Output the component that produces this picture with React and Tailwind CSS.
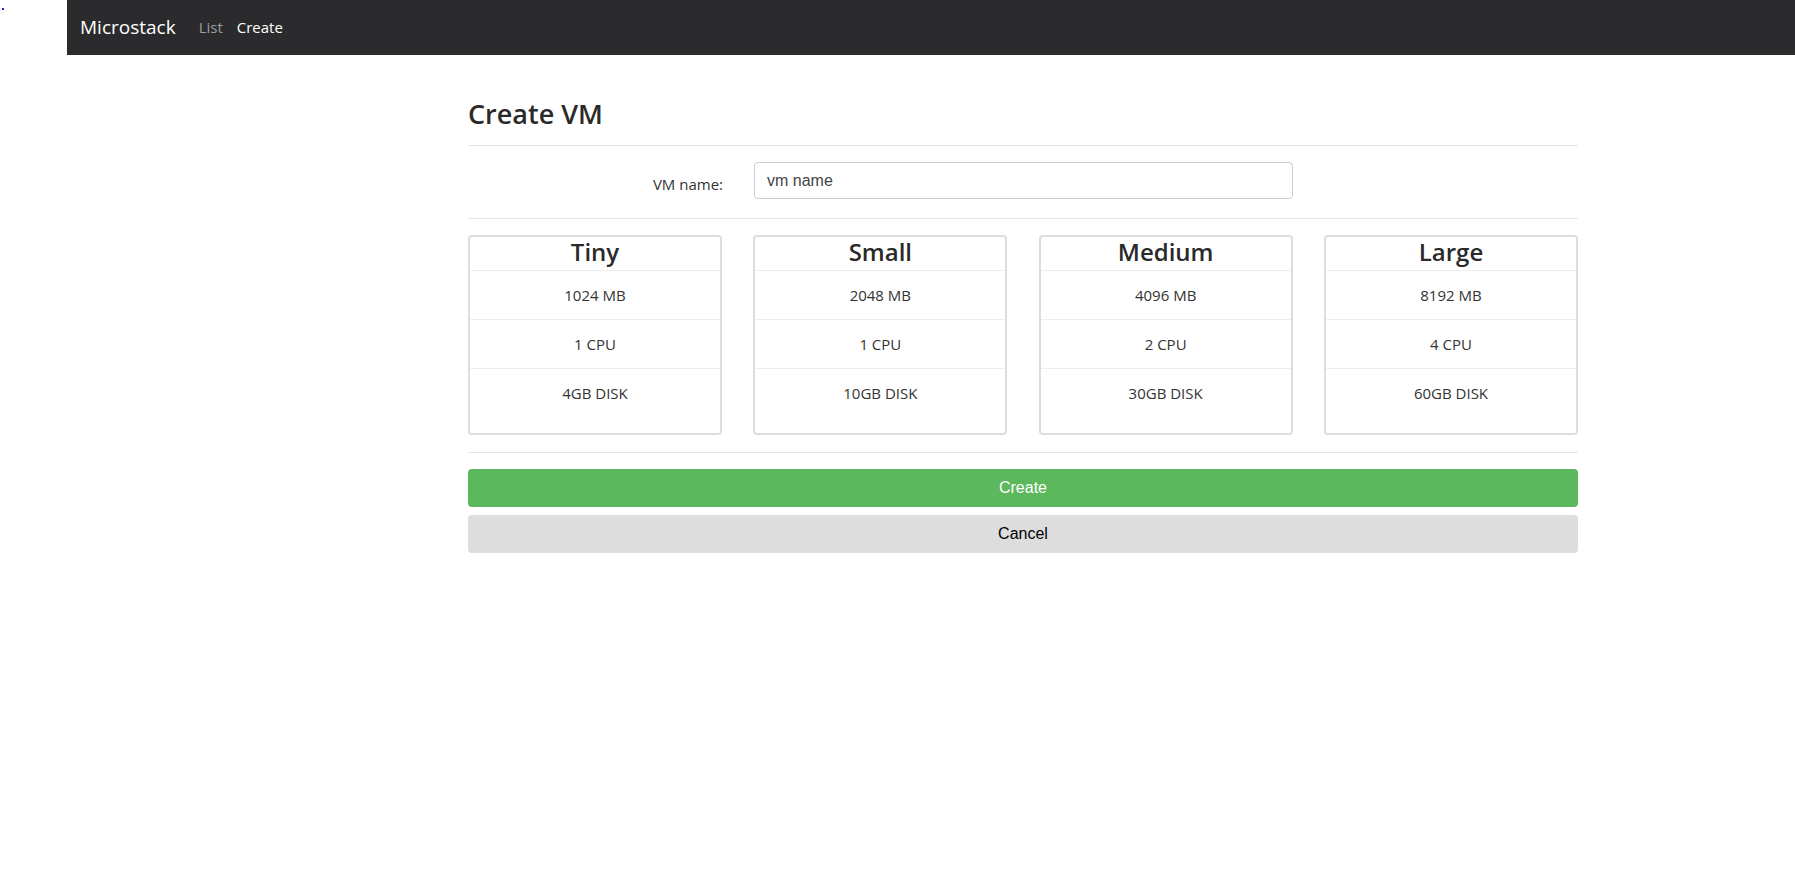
const sizes = [
  { name: 'Tiny', ram: '1024 MB', cpu: '1 CPU', disk: '4GB DISK' },
  { name: 'Small', ram: '2048 MB', cpu: '1 CPU', disk: '10GB DISK' },
  { name: 'Medium', ram: '4096 MB', cpu: '2 CPU', disk: '30GB DISK' },
  { name: 'Large', ram: '8192 MB', cpu: '4 CPU', disk: '60GB DISK' },
];

function SizeCard({ size }) {
  return (
    <div className="flex w-[254px] flex-col rounded-[4px] border-2 border-[#dddddd] text-center">
      <div className="flex h-[34px] items-start justify-center border-b border-[#eeeeee] text-[24px] font-semibold leading-[30px] text-[#2a2a2a]">
        {size.name}
      </div>
      <div className="flex h-[49px] items-center justify-center border-b border-[#eeeeee] text-[15px]">{size.ram}</div>
      <div className="flex h-[49px] items-center justify-center border-b border-[#eeeeee] text-[15px]">{size.cpu}</div>
      <div className="flex h-[48px] items-center justify-center text-[15px]">{size.disk}</div>
      <div className="h-[16px]" />
    </div>
  );
}

export default function App() {
  return (
    <div className="flex min-h-screen bg-white text-[#333333]" style={{ fontFamily: '"Open Sans", "Noto Sans", sans-serif' }}>
      <div className="w-[67px] shrink-0">
        <div className="ml-[2px] mt-[8px] h-[2px] w-[2px] bg-[#2222cc]" />
      </div>

      <div className="flex-1">
        <nav className="flex h-[55px] items-center bg-[#2b2b2d] pl-[13px]">
          <span className="text-[19px] text-white">Microstack</span>
          <a className="ml-[23px] text-[15px] text-[#9d9d9d]">List</a>
          <a className="ml-[14px] text-[15px] text-white">Create</a>
        </nav>

        <main className="ml-[401px] w-[1110px]">
          <h2 className="mt-[42px] h-[34px] text-[27px] font-semibold leading-[34px] text-[#2a2a2a]">Create VM</h2>
          <hr className="mt-[14px] border-[#e5e5e5]" />

          <div className="mt-[16px] flex items-center">
            <label className="w-[255px] pt-[8px] text-right text-[15px] text-[#333]">VM name:</label>
            <input
              type="text"
              defaultValue="vm name"
              className="ml-[31px] h-[37px] w-[539px] rounded-[4px] border border-[#cccccc] px-[12px] text-[16px] text-[#444] outline-none"
              style={{ fontFamily: '"Liberation Sans", Arial, sans-serif' }}
            />
          </div>

          <hr className="mt-[19px] border-[#e5e5e5]" />

          <div className="mt-[16px] flex justify-between">
            {sizes.map((s) => (
              <SizeCard key={s.name} size={s} />
            ))}
          </div>

          <hr className="mt-[17px] border-[#e5e5e5]" />

          <div className="mt-[16px] flex flex-col gap-[8px]" style={{ fontFamily: '"Liberation Sans", Arial, sans-serif' }}>
            <button className="h-[38px] w-full rounded-[4px] bg-[#5cb85c] text-[16px] text-white">Create</button>
            <button className="h-[38px] w-full rounded-[4px] bg-[#dddddd] text-[16px] text-black">Cancel</button>
          </div>
        </main>
      </div>
    </div>
  );
}
